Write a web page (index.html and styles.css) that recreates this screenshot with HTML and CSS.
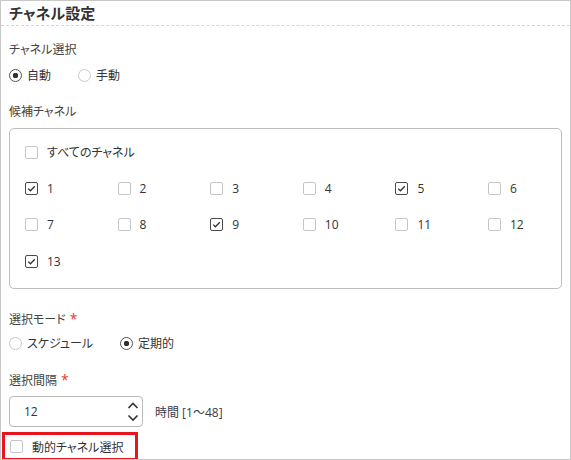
FILE: index.html
```html
<!DOCTYPE html>
<html lang="ja">
<head>
<meta charset="utf-8">
<title>チャネル設定</title>
<link rel="stylesheet" href="styles.css">
</head>
<body>
<div class="page">
  <div class="header"><h1 class="title">チャネル設定</h1></div>
  <div class="content">
    <div class="label l1">チャネル選択</div>
    <div class="radios r1">
      <div class="radio"><span class="rdot checked"></span><span>自動</span></div>
      <div class="radio"><span class="rdot"></span><span>手動</span></div>
    </div>

    <div class="label l2">候補チャネル</div>
    <div class="chbox">
      <div class="cb"><span class="box"></span><span>すべてのチャネル</span></div>
      <div class="grid">
        <div class="cb"><span class="box on"><svg viewBox="0 0 11 11" width="11" height="11"><polyline points="2.2,5.6 4.4,7.8 8.8,3.2" /></svg></span><span>1</span></div>
        <div class="cb"><span class="box"></span><span>2</span></div>
        <div class="cb"><span class="box"></span><span>3</span></div>
        <div class="cb"><span class="box"></span><span>4</span></div>
        <div class="cb"><span class="box on"><svg viewBox="0 0 11 11" width="11" height="11"><polyline points="2.2,5.6 4.4,7.8 8.8,3.2" /></svg></span><span>5</span></div>
        <div class="cb"><span class="box"></span><span>6</span></div>
        <div class="cb"><span class="box"></span><span>7</span></div>
        <div class="cb"><span class="box"></span><span>8</span></div>
        <div class="cb"><span class="box on"><svg viewBox="0 0 11 11" width="11" height="11"><polyline points="2.2,5.6 4.4,7.8 8.8,3.2" /></svg></span><span>9</span></div>
        <div class="cb"><span class="box"></span><span>10</span></div>
        <div class="cb"><span class="box"></span><span>11</span></div>
        <div class="cb"><span class="box"></span><span>12</span></div>
        <div class="cb"><span class="box on"><svg viewBox="0 0 11 11" width="11" height="11"><polyline points="2.2,5.6 4.4,7.8 8.8,3.2" /></svg></span><span>13</span></div>
      </div>
    </div>

    <div class="label l3">選択モード<span class="req">*</span></div>
    <div class="radios r2">
      <div class="radio"><span class="rdot"></span><span>スケジュール</span></div>
      <div class="radio"><span class="rdot checked"></span><span>定期的</span></div>
    </div>

    <div class="label l4">選択間隔<span class="req">*</span></div>
    <div class="interval">
      <div class="spin">
        <span class="val">12</span>
        <svg class="arrows" viewBox="0 0 12 29" width="12" height="29"><polyline points="1.5,11 6,6.5 10.5,11" /><polyline points="1.5,18.5 6,23 10.5,18.5" /></svg>
      </div>
      <span class="unit">時間 [1～48]</span>
    </div>

    <div class="dyn"><span class="box"></span><span>動的チャネル選択</span></div>
  </div>
</div>
</body>
</html>
```
FILE: styles.css
```css
* { box-sizing: border-box; }

body {
  margin: 0;
  font-family: "Open Sans", "Noto Sans CJK JP", sans-serif;
  font-size: 12px;
  font-feature-settings: "palt";
  color: #333;
  background: #fff;
}

.page {
  width: 571px;
  height: 460px;
  border: 1px solid #c8c8c8;
  background: #fff;
  overflow: hidden;
}

.header {
  height: 25px;
  border-bottom: 1px dashed #d6d6d6;
  padding-left: 8px;
}

.title {
  margin: 0;
  font-size: 15px;
  font-weight: bold;
  line-height: 24px;
  color: #333;
}

.content {
  padding: 0 8px;
}

.label {
  line-height: 16px;
  color: #444;
}

.l1 { margin-top: 16px; }
.l2 { margin-top: 19px; }
.l3 { margin-top: 22px; }
.l4 { margin-top: 19px; }

.req {
  color: #e53935;
  font-size: 14px;
  margin-left: 4px;
}

.radios {
  display: flex;
  gap: 27px;
  height: 20px;
  align-items: center;
}
.r1 { margin-top: 7px; }
.r2 { margin-top: 5px; }

.radio {
  display: flex;
  align-items: center;
  gap: 5px;
}

.rdot {
  width: 13px;
  height: 13px;
  border-radius: 50%;
  border: 1px solid #c8c8c8;
  flex: none;
}

.rdot.checked {
  border-color: #555;
  background: radial-gradient(circle, #333 0 2.5px, transparent 3px);
}

.chbox {
  margin-top: 8px;
  border: 1px solid #bdbdbd;
  border-radius: 5px;
  padding: 13px 8px 17px 15px;
}

.cb {
  display: flex;
  align-items: center;
  gap: 9px;
  height: 20px;
}

.grid {
  display: grid;
  grid-template-columns: repeat(5, 92.6px) 1fr;
  row-gap: 16.5px;
  margin-top: 16px;
}

.box {
  width: 13px;
  height: 13px;
  border: 1px solid #c6c6c6;
  border-radius: 2px;
  flex: none;
  display: flex;
}

.box.on {
  border-color: #4a4a4a;
}

.box svg polyline {
  fill: none;
  stroke: #333;
  stroke-width: 1.3;
}

.interval {
  display: flex;
  align-items: center;
  gap: 12px;
  margin-top: 7px;
}

.spin {
  width: 134px;
  height: 31px;
  border: 1px solid #b9b9b9;
  border-radius: 4px;
  display: flex;
  align-items: center;
  justify-content: space-between;
  padding: 0 3px 0 14px;
}

.arrows polyline {
  fill: none;
  stroke: #333;
  stroke-width: 1.6;
}

.unit {
  color: #3a3a4a;
}

.dyn {
  margin: 5px 0 0 -7px;
  width: 136px;
  height: 29px;
  border: 3px solid #e8141e;
  padding-left: 5px;
  display: flex;
  align-items: center;
  gap: 9px;
}
```
